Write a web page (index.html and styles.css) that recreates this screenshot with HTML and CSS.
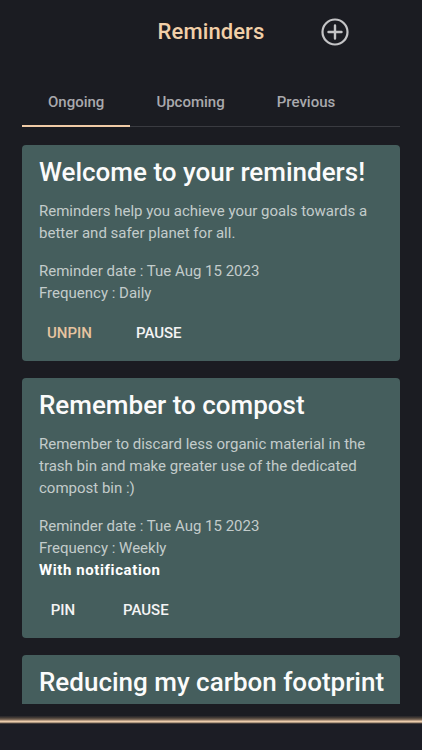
FILE: index.html
```html
<!DOCTYPE html>
<html lang="en">
<head>
    <meta charset="UTF-8">
    <meta name="viewport" content="width=device-width, initial-scale=1.0">
    <title>Reminders</title>
    <link rel="stylesheet" href="styles.css">
</head>
<body>
    <div class="app">
        <!-- Cabecera -->
        <header class="header">
            <h1 class="title">Reminders</h1>
            <button class="add-btn" aria-label="Add reminder">
                <svg width="30" height="30" viewBox="0 0 30 30">
                    <circle cx="15" cy="15" r="12.5" fill="none" stroke="#c4c4c6" stroke-width="2.2"/>
                    <path d="M15 8.5v13M8.5 15h13" stroke="#c4c4c6" stroke-width="2.4" stroke-linecap="round"/>
                </svg>
            </button>
        </header>

        <!-- Pestañas -->
        <nav class="tabs">
            <div class="tab active">Ongoing</div>
            <div class="tab">Upcoming</div>
            <div class="tab">Previous</div>
        </nav>

        <!-- Lista de recordatorios -->
        <main class="list">
            <div class="card">
                <h2>Welcome to your reminders!</h2>
                <p class="desc">Reminders help you achieve your goals towards a better and safer planet for all.</p>
                <div class="meta">
                    <p>Reminder date : Tue Aug 15 2023</p>
                    <p>Frequency : Daily</p>
                </div>
                <div class="actions">
                    <button class="text-btn accent">Unpin</button>
                    <button class="text-btn">Pause</button>
                </div>
            </div>

            <div class="card">
                <h2>Remember to compost</h2>
                <p class="desc">Remember to discard less organic material in the trash bin and make greater use of the dedicated compost bin :)</p>
                <div class="meta">
                    <p>Reminder date : Tue Aug 15 2023</p>
                    <p>Frequency : Weekly</p>
                    <p class="notif">With notification</p>
                </div>
                <div class="actions">
                    <button class="text-btn">Pin</button>
                    <button class="text-btn">Pause</button>
                </div>
            </div>

            <div class="card">
                <h2>Reducing my carbon footprint</h2>
            </div>
        </main>

        <footer class="bottom-bar"></footer>
    </div>
</body>
</html>
```

FILE: styles.css
```css
/* Estilo Global */
body {
    margin: 0;
    padding: 0;
    background-color: #1b1c22;
    font-family: 'Roboto', 'Noto Sans', sans-serif;
    color: #fff;
}

.app {
    height: 750px;
    display: flex;
    flex-direction: column;
    overflow: hidden;
}

/* Cabecera */
.header {
    display: grid;
    grid-template-columns: 1fr auto 1fr;
    align-items: center;
    height: 63px;
    flex-shrink: 0;
}

.title {
    grid-column: 2;
    margin: 0;
    font-size: 22px;
    font-weight: 500;
    color: #f1cfa8;
    letter-spacing: 0.1px;
}

.add-btn {
    justify-self: start;
    margin-left: 56px;
    padding: 0;
    background: none;
    border: none;
    width: 30px;
    height: 30px;
    display: flex;
}

/* Pestañas */
.tabs {
    display: flex;
    margin: 15px 22px 0;
    border-bottom: 1px solid #3a3b41;
    flex-shrink: 0;
}

.tab {
    padding: 0 26px;
    height: 48px;
    line-height: 48px;
    font-size: 15px;
    font-weight: 500;
    color: #a9a9ad;
    position: relative;
}

.tab.active::after {
    content: "";
    position: absolute;
    left: 0;
    right: 0;
    bottom: -1px;
    height: 2px;
    background-color: #efcaa6;
}

/* Tarjetas */
.list {
    flex: 1;
    overflow: hidden;
    padding: 18px 22px 0;
    display: flex;
    flex-direction: column;
    gap: 17px;
}

.card {
    background-color: #455e5d;
    border-radius: 4px;
    padding: 11px 10px 10px 17px;
    flex-shrink: 0;
}

.card h2 {
    margin: 0;
    font-size: 26px;
    line-height: 32px;
    font-weight: 500;
    color: #fbfbfb;
    white-space: nowrap;
}

.desc {
    margin: 12px 7px 0 0;
    font-size: 15px;
    line-height: 22px;
    color: #c3cccb;
}

.meta {
    margin-top: 16px;
}

.meta p {
    margin: 0;
    font-size: 15px;
    line-height: 22px;
    color: #c3cccb;
}

.meta .notif {
    font-weight: 700;
    color: #fff;
    letter-spacing: 0.6px;
}

.actions {
    display: flex;
    gap: 12px;
    margin: 11px 0 0 -8px;
}

.text-btn {
    min-width: 64px;
    height: 36px;
    padding: 0 16px;
    background: none;
    border: none;
    font-family: inherit;
    font-size: 15px;
    font-weight: 500;
    text-transform: uppercase;
    color: #f4f4f4;
}

.text-btn.accent {
    color: #e6c4a0;
}

/* Barra inferior */
.bottom-bar {
    flex-shrink: 0;
    height: 34px;
    margin-top: 12px;
    background: linear-gradient(to bottom, #24242a 0px, #4a4038 2px, #8a7462 4px, #e7c6a6 5px, #f0d2b2 6px, #6d5c4e 7px, #1c1d25 8px, #1c1d25 100%);
}
```
